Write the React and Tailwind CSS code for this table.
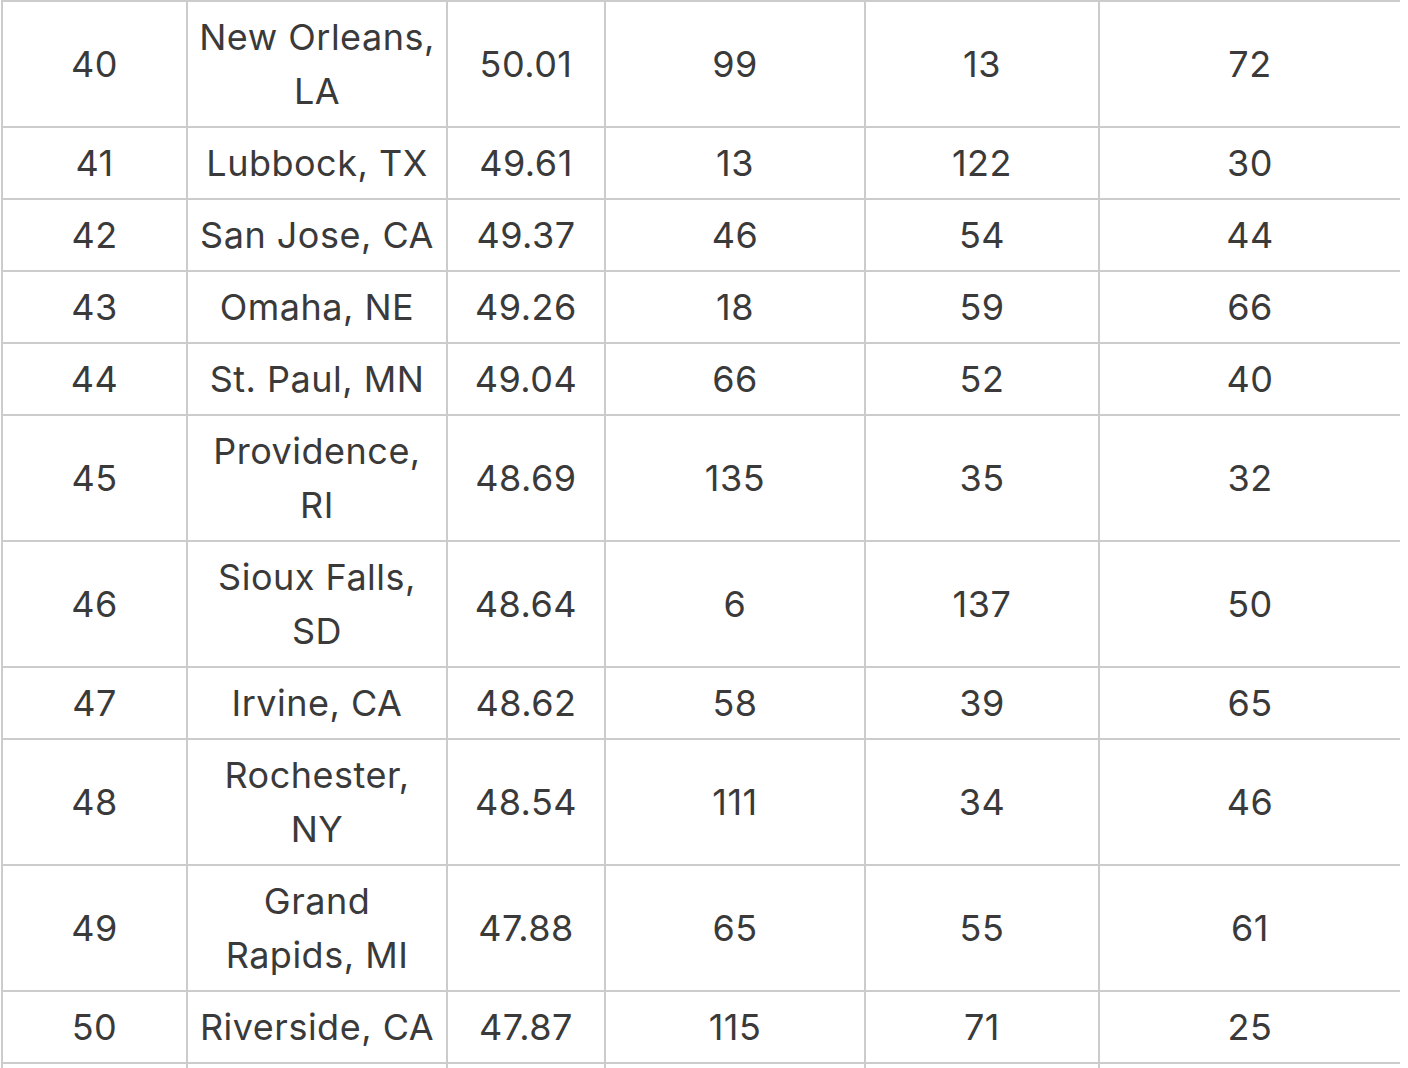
import React from "react";

const rows = [
  ["40", ["New Orleans,", "LA"], "50.01", "99", "13", "72"],
  ["41", ["Lubbock, TX"], "49.61", "13", "122", "30"],
  ["42", ["San Jose, CA"], "49.37", "46", "54", "44"],
  ["43", ["Omaha, NE"], "49.26", "18", "59", "66"],
  ["44", ["St. Paul, MN"], "49.04", "66", "52", "40"],
  ["45", ["Providence,", "RI"], "48.69", "135", "35", "32"],
  ["46", ["Sioux Falls,", "SD"], "48.64", "6", "137", "50"],
  ["47", ["Irvine, CA"], "48.62", "58", "39", "65"],
  ["48", ["Rochester,", "NY"], "48.54", "111", "34", "46"],
  ["49", ["Grand", "Rapids, MI"], "47.88", "65", "55", "61"],
  ["50", ["Riverside, CA"], "47.87", "115", "71", "25"],
  ["", [""], "", "", "", ""],
];

const cell = "border-2 border-[#cccccc] py-2 px-1 align-middle";

export default function App() {
  return (
    <div className="w-[1408px] h-[1068px] overflow-hidden bg-white pl-[1px]">
      <table className="table-fixed border-collapse w-[1398px] text-[36px] leading-[54px] tracking-[0.5px] text-[#3a3a3a] text-center font-['Inter',sans-serif] font-normal">
        <colgroup>
          <col className="w-[185px]" />
          <col className="w-[260px]" />
          <col className="w-[158px]" />
          <col className="w-[260px]" />
          <col className="w-[234px]" />
          <col className="w-[301px]" />
        </colgroup>
        <tbody>
          {rows.map((r, i) => (
            <tr key={i}>
              <td className={cell}>{r[0]}</td>
              <td className={cell}>
                {r[1].map((l, j) => (
                  <div key={j} className="whitespace-nowrap">{l}</div>
                ))}
              </td>
              <td className={cell}>{r[2]}</td>
              <td className={cell}>{r[3]}</td>
              <td className={cell}>{r[4]}</td>
              <td className="border-2 border-r-0 border-[#cccccc] py-2 px-1 align-middle">{r[5]}</td>
            </tr>
          ))}
        </tbody>
      </table>
    </div>
  );
}
